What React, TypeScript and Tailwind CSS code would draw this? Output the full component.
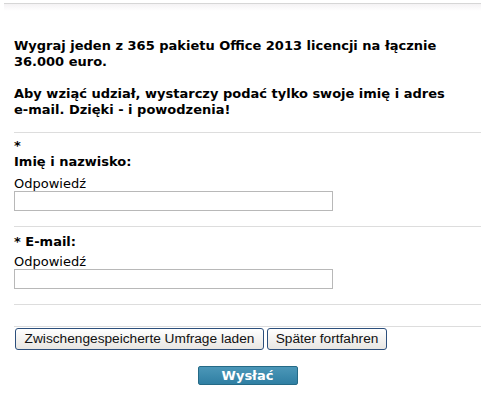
export default function App() {
  return (
    <div className="w-[488px] h-[418px] bg-white text-black font-['DejaVu_Sans',Verdana,sans-serif]">
      <div className="ml-[4px] mr-[7px] pt-[3px]">
        <div className="h-[8px] border-t border-[#d6d6d6] bg-gradient-to-b from-[#f4f2f4] to-white" />
      </div>

      <div className="pl-[14px] pr-[7px]">
        <div className="pt-[27px] pb-[14px] text-[13px] font-bold leading-[16px]">
          <p>Wygraj jeden z 365 pakietu Office 2013 licencji na łącznie 36.000 euro.</p>
          <p className="mt-[16px]">
            Aby wziąć udział, wystarczy podać tylko swoje imię i adres{" "}
            <span className="whitespace-nowrap">e-mail.</span> Dzięki - i powodzenia!
          </p>
        </div>

        <section className="border-t border-[#dddddd] pt-[6px] pb-[15px]">
          <div className="text-[13px] font-bold leading-[14px]">*</div>
          <div className="text-[13px] font-bold leading-[18px]">Imię i nazwisko:</div>
          <label className="block mt-[7px] text-[13px] leading-[12px]">Odpowiedź</label>
          <input
            type="text"
            className="block mt-[1px] w-[319px] h-[20px] border border-[#b8b8b8] bg-white outline-none"
          />
        </section>

        <section className="border-t border-[#dddddd] pt-[6px] pb-[15px]">
          <div className="text-[13px] font-bold leading-[18px]">* E-mail:</div>
          <label className="block mt-[5px] text-[13px] leading-[12px]">Odpowiedź</label>
          <input
            type="text"
            className="block mt-[1px] w-[319px] h-[20px] border border-[#b8b8b8] bg-white outline-none"
          />
        </section>

        <div className="h-[22px] border-t border-[#dddddd]" />

        <div className="border-t border-[#dddddd] pt-[1px] flex gap-[3px] pl-[1px] font-['Liberation_Sans',Arial,sans-serif] text-[13.7px] text-[#111]">
          <button className="w-[249px] h-[22px] rounded-[3px] border border-[#2c4f7c] bg-gradient-to-b from-white to-[#e8e6e2] leading-[18px]">
            Zwischengespeicherte Umfrage laden
          </button>
          <button className="w-[120px] h-[22px] rounded-[3px] border border-[#2c4f7c] bg-gradient-to-b from-white to-[#e8e6e2] leading-[18px]">
            Später fortfahren
          </button>
        </div>

        <div className="mt-[16px] flex justify-center">
          <button className="w-[100px] h-[19px] rounded-[2px] border border-[#256a86] bg-gradient-to-b from-[#4b97b8] to-[#2f7fa3] text-white text-[13px] font-bold leading-[16px]">
            Wysłać
          </button>
        </div>
      </div>
    </div>
  );
}
